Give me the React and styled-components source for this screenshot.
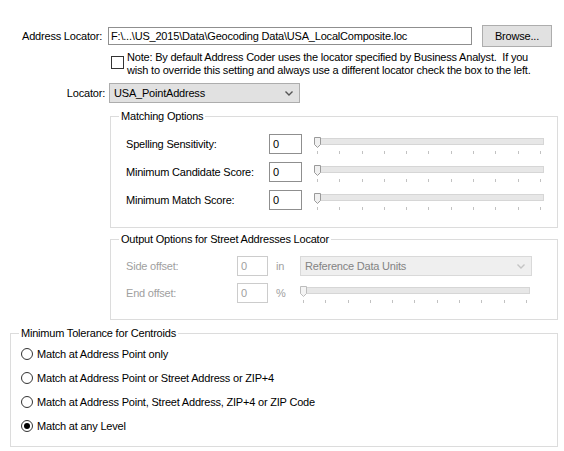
import React from "react";
import styled, { createGlobalStyle } from "styled-components";

const Global = createGlobalStyle`
  html, body { margin: 0; padding: 0; background: #fff; }
  body {
    font-family: "Liberation Sans", Arial, sans-serif;
    font-size: 11px;
    letter-spacing: -0.2px;
    color: #000;
  }
  * { box-sizing: border-box; }
`;

const Page = styled.div`
  width: 564px;
  height: 451px;
  padding: 25px 6px 0 10px;
  overflow: hidden;
`;

const Row = styled.div`
  display: flex;
  align-items: center;
  height: ${(p) => p.$h || 22}px;
  margin-top: ${(p) => p.$mt || 0}px;
`;

const Label = styled.div`
  width: ${(p) => p.$w}px;
  margin-right: ${(p) => p.$mr || 0}px;
  text-align: ${(p) => p.$align || "left"};
  color: ${(p) => (p.$disabled ? "#a0a0a0" : "#000")};
  white-space: nowrap;
  flex-shrink: 0;
`;

const TextBox = styled.div`
  width: ${(p) => p.$w}px;
  height: ${(p) => p.$h || 20}px;
  border: 1px solid ${(p) => (p.$disabled ? "#cccccc" : "#8f8f8f")};
  background: #fff;
  color: ${(p) => (p.$disabled ? "#a0a0a0" : "#000")};
  padding: 0 ${(p) => p.$pad ?? 3}px;
  display: flex;
  align-items: center;
  white-space: nowrap;
  overflow: hidden;
  flex-shrink: 0;
`;

const Button = styled.button`
  width: 70px;
  height: 22px;
  margin-left: 10px;
  background: #e1e1e1;
  border: 1px solid #adadad;
  font: inherit;
  letter-spacing: inherit;
  color: #000;
  padding: 0;
`;

const NoteRow = styled.div`
  display: flex;
  align-items: flex-start;
  margin-top: 4px;
  padding-left: 101px;
`;

const CheckBox = styled.div`
  width: 13px;
  height: 13px;
  border: 1px solid #333;
  background: #fff;
  margin-top: 5px;
  margin-right: 3px;
  flex-shrink: 0;
`;

const NoteText = styled.div`
  line-height: 13px;
  white-space: pre;
`;

const Select = styled.div`
  width: ${(p) => p.$w}px;
  height: 20px;
  background: ${(p) => (p.$disabled ? "#efefef" : "#e1e1e1")};
  border: 1px solid ${(p) => (p.$disabled ? "#d9d9d9" : "#adadad")};
  color: ${(p) => (p.$disabled ? "#838383" : "#000")};
  display: flex;
  align-items: center;
  justify-content: space-between;
  padding: 0 6px 0 4px;
  flex-shrink: 0;
`;

const Group = styled.fieldset`
  margin: ${(p) => p.$mt}px 0 0 ${(p) => p.$ml || 0}px;
  padding: ${(p) => p.$pt}px ${(p) => p.$pr || 13}px ${(p) => p.$pb}px ${(p) => p.$pl}px;
  border: 1px solid #dcdcdc;
  min-inline-size: 0;
`;

const Legend = styled.legend`
  padding: 0 2px;
  margin-left: ${(p) => p.$ml}px;
  line-height: 13px;
  color: #000;
`;

const Rows = styled.div`
  display: flex;
  flex-direction: column;
  gap: ${(p) => p.$gap}px;
`;

const SliderWrap = styled.div`
  position: relative;
  flex: ${(p) => (p.$w ? "none" : 1)};
  width: ${(p) => (p.$w ? `${p.$w}px` : "auto")};
  margin-left: ${(p) => p.$ml || 0}px;
  height: 20px;
  align-self: flex-start;
`;

const Track = styled.div`
  margin-top: 4px;
  height: 7px;
  background: #e7e7e7;
  border: 1px solid #d6d6d6;
`;

const Ticks = styled.div`
  margin-top: 6px;
  padding: 0 ${(p) => p.$pad}px;
  display: flex;
  justify-content: space-between;
`;

const Tick = styled.div`
  width: 1px;
  height: 3px;
  background: #c2c2c2;
`;

const Thumb = styled.svg`
  position: absolute;
  left: ${(p) => p.$left}px;
  top: 3px;
`;

const Unit = styled.div`
  width: 24px;
  margin-left: 8px;
  color: #a0a0a0;
  flex-shrink: 0;
`;

const RadioRow = styled.label`
  display: flex;
  align-items: center;
  height: 24px;
`;

const RadioCircle = styled.span`
  width: 12px;
  height: 12px;
  border-radius: 50%;
  border: 1px solid #333;
  background: #fff;
  margin-right: 4px;
  display: flex;
  align-items: center;
  justify-content: center;
  flex-shrink: 0;
  &::after {
    content: "";
    width: 6px;
    height: 6px;
    border-radius: 50%;
    background: ${(p) => (p.$checked ? "#000" : "transparent")};
  }
`;

const Chevron = ({ color = "#555" }) => (
  <svg width="8" height="5" viewBox="0 0 8 5">
    <path d="M0.5 0.5 L4 4 L7.5 0.5" fill="none" stroke={color} strokeWidth="1.4" />
  </svg>
);

const Slider = ({ w, ml, thumbLeft = 0, pad = 3, disabled }) => (
  <SliderWrap $w={w} $ml={ml}>
    <Track />
    <Ticks $pad={pad}>
      {Array.from({ length: 11 }).map((_, i) => (
        <Tick key={i} />
      ))}
    </Ticks>
    <Thumb $left={thumbLeft} width="7" height="11" viewBox="0 0 7 11">
      <path
        d="M0.5 0.5 H6.5 V7.5 L3.5 10.5 L0.5 7.5 Z"
        fill={disabled ? "#f4f4f4" : "#f0f0f0"}
        stroke={disabled ? "#bdbdbd" : "#9a9a9a"}
      />
    </Thumb>
  </SliderWrap>
);

const matching = ["Spelling Sensitivity:", "Minimum Candidate Score:", "Minimum Match Score:"];
const radios = [
  "Match at Address Point only",
  "Match at Address Point or Street Address or ZIP+4",
  "Match at Address Point, Street Address, ZIP+4 or ZIP Code",
  "Match at any Level",
];

export default function App() {
  return (
    <Page>
      <Global />
      <Row $h={22}>
        <Label $w={92} $mr={6} $align="right">Address Locator:</Label>
        <TextBox $w={364} $h={18} $pad={2}>
          F:\...\US_2015\Data\Geocoding Data\USA_LocalComposite.loc
        </TextBox>
        <Button>Browse...</Button>
      </Row>
      <NoteRow>
        <CheckBox />
        <NoteText>
          {"Note: By default Address Coder uses the locator specified by Business Analyst.  If you\nwish to override this setting and always use a different locator check the box to the left."}
        </NoteText>
      </NoteRow>
      <Row $h={20} $mt={6}>
        <Label $w={95} $mr={4} $align="right">Locator:</Label>
        <Select $w={191}>
          <span>USA_PointAddress</span>
          <Chevron />
        </Select>
      </Row>

      <Group $mt={7} $ml={100} $pt={11} $pb={17} $pl={15} $pr={13}>
        <Legend $ml={-7}>Matching Options</Legend>
        <Rows $gap={8}>
          {matching.map((m) => (
            <Row key={m} $h={20}>
              <Label $w={143}>{m}</Label>
              <TextBox $w={33}>0</TextBox>
              <Slider ml={12} />
            </Row>
          ))}
        </Rows>
      </Group>

      <Group $mt={5} $ml={100} $pt={10} $pb={16} $pl={15} $pr={25}>
        <Legend $ml={-7}>Output Options for Street Addresses Locator</Legend>
        <Rows $gap={7}>
          <Row $h={20}>
            <Label $w={111} $disabled>Side offset:</Label>
            <TextBox $w={31} $disabled>0</TextBox>
            <Unit>in</Unit>
            <Select $w={232} $disabled>
              <span>Reference Data Units</span>
              <Chevron color="#c4c4c4" />
            </Select>
          </Row>
          <Row $h={20}>
            <Label $w={111} $disabled>End offset:</Label>
            <TextBox $w={31} $disabled>0</TextBox>
            <Unit>%</Unit>
            <Slider w={230} disabled />
          </Row>
        </Rows>
      </Group>

      <Group $mt={7} $pt={2} $pb={8} $pl={10}>
        <Legend $ml={-2}>Minimum Tolerance for Centroids</Legend>
        {radios.map((r, i) => (
          <RadioRow key={r}>
            <RadioCircle $checked={i === 3} />
            {r}
          </RadioRow>
        ))}
      </Group>
    </Page>
  );
}
